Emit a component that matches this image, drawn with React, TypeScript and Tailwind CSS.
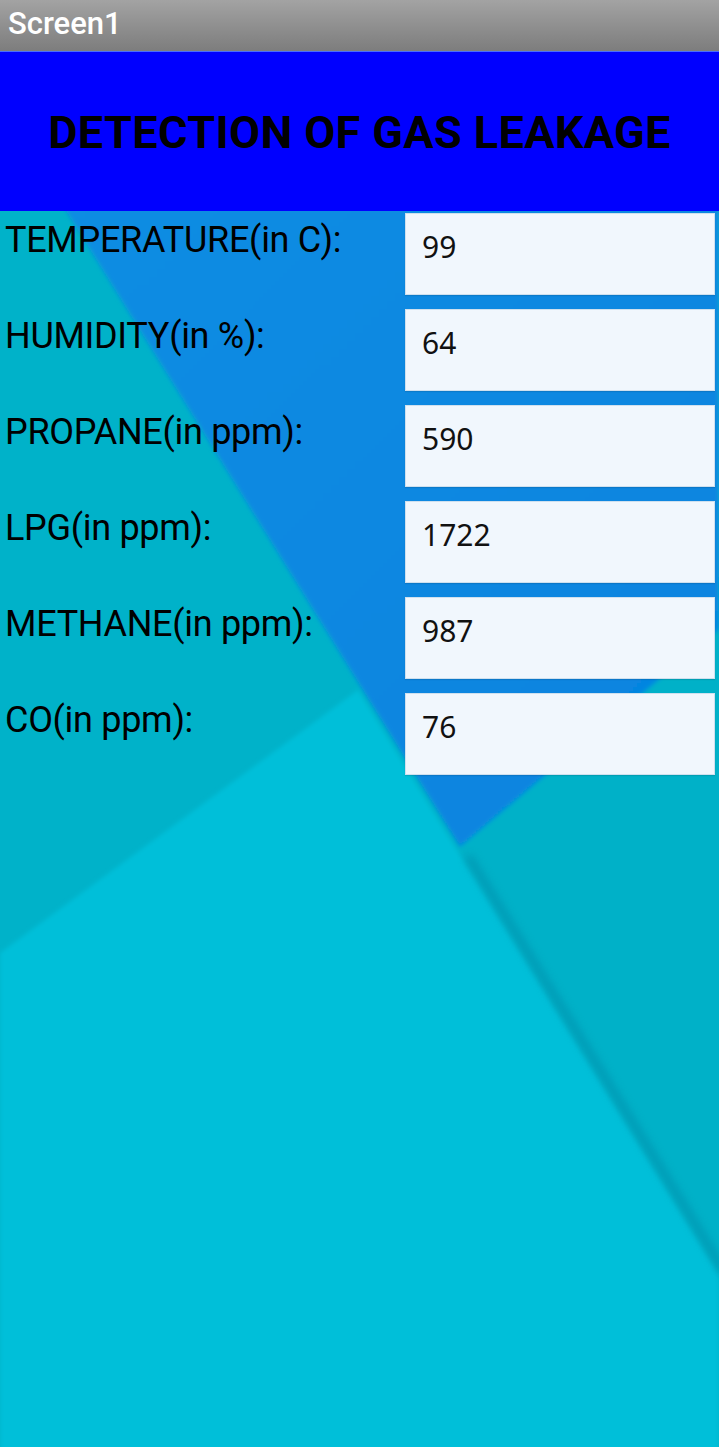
import React from "react";

const readings = [
  { label: "TEMPERATURE(in C):", value: "99" },
  { label: "HUMIDITY(in %):", value: "64" },
  { label: "PROPANE(in ppm):", value: "590" },
  { label: "LPG(in ppm):", value: "1722" },
  { label: "METHANE(in ppm):", value: "987" },
  { label: "CO(in ppm):", value: "76" },
];

// wallpaper drawn behind the form (coords relative to the content area)
function Wallpaper() {
  return (
    <svg
      className="absolute inset-0 h-full w-full"
      viewBox="0 0 719 1236"
      preserveAspectRatio="none"
    >
      <defs>
        <filter id="soft" x="-5%" y="-5%" width="110%" height="110%">
          <feGaussianBlur stdDeviation="2" />
        </filter>
        <filter id="shade" x="-20%" y="-20%" width="140%" height="140%">
          <feGaussianBlur stdDeviation="4" />
        </filter>
        <linearGradient id="blue" x1="0" y1="0" x2="1" y2="1">
          <stop offset="0" stopColor="#0a8de2" />
          <stop offset="1" stopColor="#0683e0" />
        </linearGradient>
      </defs>
      <rect width="719" height="1236" fill="#00b2c9" />
      <g filter="url(#soft)">
        <polygon points="0,742 358,479 719,1064 719,1240 0,1240" fill="#00bfd9" />
        <polygon points="460,636 719,418 719,1064" fill="#00b1c8" />
        <polygon points="60,-10 719,-10 719,418 460,636" fill="url(#blue)" />
      </g>
      <line
        x1="468"
        y1="645"
        x2="726"
        y2="1063"
        stroke="#0092ad"
        strokeWidth="8"
        opacity="0.75"
        filter="url(#shade)"
      />
    </svg>
  );
}

export default function App() {
  return (
    <div className="w-[719px] h-[1447px] flex flex-col overflow-hidden font-['Roboto',sans-serif]">
      <div className="h-[51px] shrink-0 bg-gradient-to-b from-[#a3a3a3] to-[#7d7d7d] pl-[8px] flex items-center">
        <span className="text-[31px] leading-none font-medium text-white -mt-[4px]">Screen1</span>
      </div>

      <div className="h-[160px] shrink-0 bg-[#0000ff] border-t border-[#4a6cff] flex items-center justify-center">
        <h1 className="text-[45px] font-bold text-black tracking-[0.4px] mt-[2px]">DETECTION OF GAS LEAKAGE</h1>
      </div>

      <div className="relative flex-1">
        <Wallpaper />
        <div className="relative flex flex-col gap-[14px] pt-[2px]">
          {readings.map((r) => (
            <div key={r.label} className="flex h-[82px]">
              <div className="w-[405px] pl-[5px] pt-[6px] text-[36px] leading-[42px] text-black tracking-[-0.3px]">
                {r.label}
              </div>
              <div className="w-[310px] bg-[#f1f7fd] border border-[#cfe0ee] shadow-[0_1px_1px_rgba(0,0,0,0.1)] pl-[16px] pt-[13px]">
                <span className="font-['Noto_Sans',sans-serif] text-[30px] leading-[40px] text-[#111]">
                  {r.value}
                </span>
              </div>
            </div>
          ))}
        </div>
      </div>
    </div>
  );
}
